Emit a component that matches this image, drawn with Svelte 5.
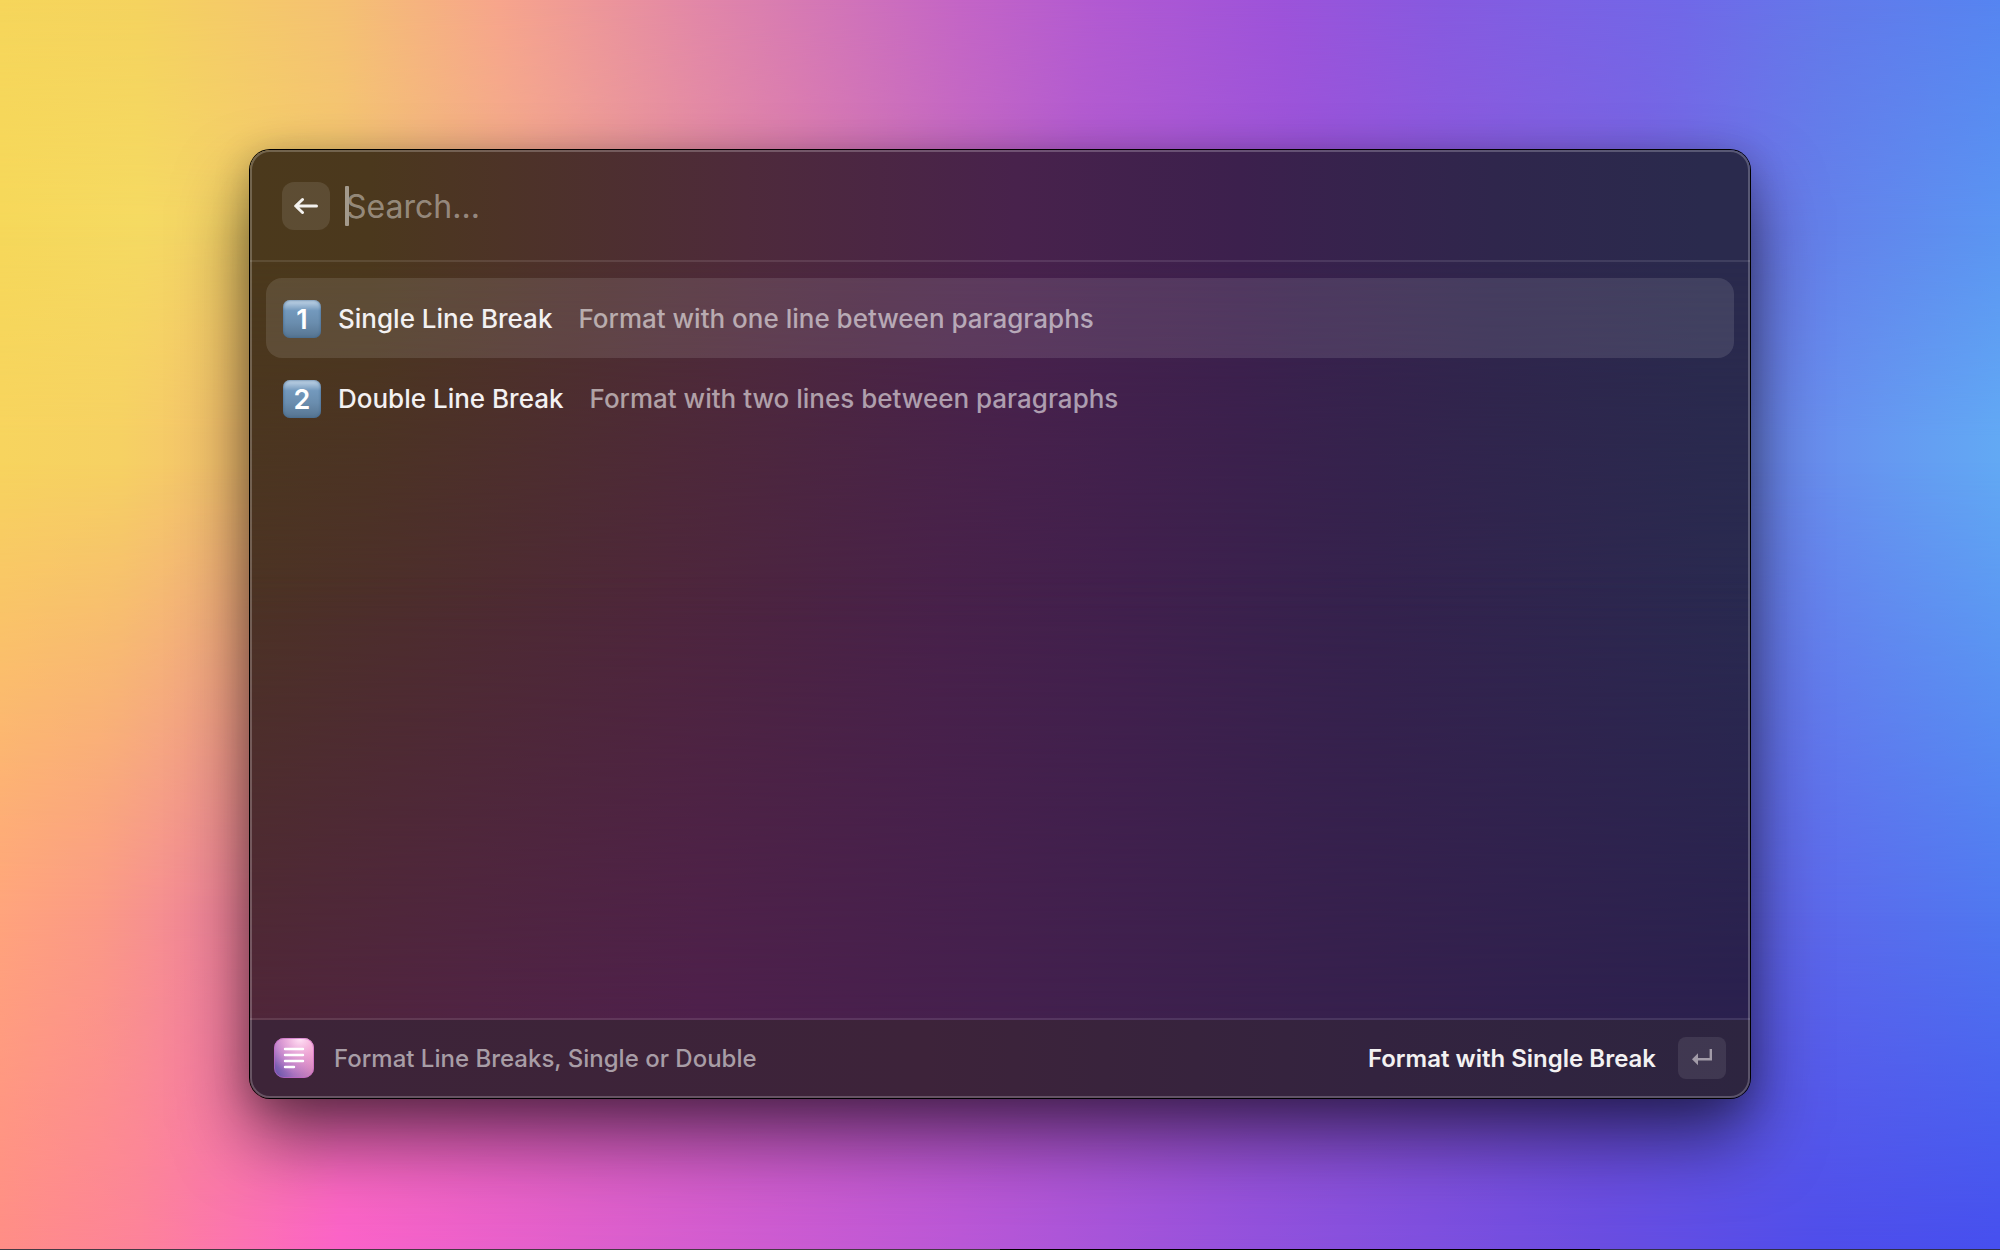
<script>
  let query = $state('');
  let selected = $state(0);
  const items = [
    { digit: '1', title: 'Single Line Break', subtitle: 'Format with one line between paragraphs' },
    { digit: '2', title: 'Double Line Break', subtitle: 'Format with two lines between paragraphs' }
  ];
</script>

<div class="desktop">
  <div class="wash w1"></div>
  <div class="wash w2"></div>
  <div class="wash w3"></div>
  <div class="wash w4"></div>

  <main class="window">
    <div class="tint t1"></div>
    <div class="tint t2"></div>
    <header>
      <button class="back" aria-label="Back">
        <svg width="24" height="18" viewBox="0 0 24 18" fill="none" stroke="#f3f1ee" stroke-width="3" stroke-linecap="round" stroke-linejoin="round">
          <path d="M22.5 9H2M8.500 2.500 1.700 9l6.800 6.500" />
        </svg>
      </button>
      <label class="search">
        <span class="caret"></span>
        <input type="text" placeholder="Search..." aria-label="Search" bind:value={query} />
      </label>
    </header>

    <ul>
      {#each items as item, i}
        <li>
          <button class="row" class:selected={selected === i} onclick={() => (selected = i)}>
            <span class="keycap">{item.digit}</span>
            <span class="title">{item.title}</span>
            <span class="subtitle">{item.subtitle}</span>
          </button>
        </li>
      {/each}
    </ul>

    <footer>
      <svg class="app" width="40" height="40" viewBox="0 0 40 40">
        <defs>
          <linearGradient id="base" x1="0" y1="1" x2="1" y2="0.4">
            <stop offset="0" stop-color="#5a50a8" />
            <stop offset="0.4" stop-color="#a872be" />
            <stop offset="1" stop-color="#ec92bc" />
          </linearGradient>
          <radialGradient id="shine" cx="0.65" cy="0.02" r="0.9">
            <stop offset="0" stop-color="#ffe3f6" />
            <stop offset="0.5" stop-color="#f8b8e6" stop-opacity="0.55" />
            <stop offset="1" stop-color="#f0a0e8" stop-opacity="0" />
          </radialGradient>
        </defs>
        <rect width="40" height="40" rx="10" fill="url(#base)" />
        <rect width="40" height="40" rx="10" fill="url(#shine)" />
        <rect x="0.500" y="0.500" width="39" height="39" rx="9.500" fill="none" stroke="#c860c4" stroke-opacity="0.6" />
        <path d="M11 11h18M11 17h18M11 23h18M11 29h9" stroke="#fff" stroke-width="2.400" stroke-linecap="round" />
      </svg>
      <span class="name">Format Line Breaks, Single or Double</span>
      <button class="action">
        <span>Format with Single Break</span>
        <kbd aria-label="Return">
          <svg width="22" height="18" viewBox="0 0 22 18">
            <path d="M19.800 0v10.200H6" fill="none" stroke="#a29ba8" stroke-width="2.400" />
            <path d="M1 10.200 7 4.200v12z" fill="#a29ba8" />
          </svg>
        </kbd>
      </button>
    </footer>
  </main>
</div>

<style>
  :global(body) {
    margin: 0;
    background: #b85ad0;
  }
  .desktop {
    position: relative;
    box-sizing: border-box;
    min-height: 100vh;
    padding: 150px 12.5%;
    font-family: Inter, 'Liberation Sans', sans-serif;
    font-weight: 500;
    overflow: hidden;
    background: linear-gradient(90deg, #f6d65b 0%, #f5d35f 7%, #f5c173 17%, #f7a58c 25%, #e287a8 35%, #c465c6 48%, #b25ad2 55%, #9d53da 64%, #875ae0 72%, #7168e8 84%, #6478ea 91%, #5685f1 100%);
  }
  .desktop::after {
    content: '';
    position: absolute;
    inset: auto 0 0;
    height: 1px;
    background: linear-gradient(90deg, #443a44 50%, #000 50%, #000 80%, #30304a 80%);
  }
  .wash {
    position: absolute;
    inset: 0;
  }
  .w1 {
    background: linear-gradient(90deg, #f6d85a 0%, #f5da62 7%, #f4c870 17%, #f3a890 27%, #dd7eae 40%, #b35cd0 54%, #9a54da 66%, #7a64e2 82%, #6480ea 91%, #5b95f2 100%);
    mask-image: linear-gradient(transparent 0%, #000 18%);
  }
  .w2 {
    background: linear-gradient(90deg, #f7d45e 0%, #f6d163 6%, #f5c070 12%, #ee8da0 25%, #c85cc8 50%, #9054dc 70%, #6a88ec 89%, #659bf1 95%, #62a9f4 100%);
    mask-image: linear-gradient(transparent 18%, #000 35%);
  }
  .w3 {
    background: linear-gradient(90deg, #ffa47c 0%, #fb9a86 5%, #f28898 10%, #ee68b8 25%, #b856d4 55%, #7050e0 80%, #5f66ea 89%, #5078f0 100%);
    mask-image: linear-gradient(transparent 37%, #000 73%);
  }
  .w4 {
    background: linear-gradient(90deg, #ff8d86 0%, #fd829a 7%, #fb62c8 17%, #df5fcc 29%, #b957d6 48%, #9151dc 63%, #6a4de0 80%, #4f4dea 91%, #464fee 100%);
    mask-image: linear-gradient(transparent 73%, #000 100%);
  }
  .window {
    position: relative;
    display: flex;
    flex-direction: column;
    box-sizing: border-box;
    min-height: calc(100vh - 302px);
    border-radius: 20px;
    overflow: hidden;
    background: linear-gradient(90deg, #4b391c 0%, #4b381d 8%, #4d3327 17%, #4e2a3b 33%, #48224c 51%, #3c204d 66%, #2f264c 83%, #2a2a4d 97%);
    box-shadow: 0 0 0 1px #000, 0 40px 72px rgb(0 0 0 / 0.54), 0 6px 36px rgb(0 0 0 / 0.24);
  }
  .window::after {
    content: '';
    position: absolute;
    inset: 0;
    border: 2px solid rgb(255 255 255 / 0.22);
    border-radius: 20px;
    pointer-events: none;
  }
  .tint {
    position: absolute;
    inset: 0;
  }
  .t1 {
    background: linear-gradient(90deg, #4c3324 0%, #4d2e2c 10%, #4e263c 28%, #48214a 46%, #41204d 58%, #34224d 75%, #292a50 100%);
    mask-image: linear-gradient(transparent 12%, #000 50%);
  }
  .t2 {
    background: linear-gradient(90deg, #50263a 0%, #502344 15%, #4e204c 30%, #44204e 50%, #37204d 72%, #2a204e 100%);
    mask-image: linear-gradient(transparent 45%, #000 93%);
  }
  header {
    position: relative;
    display: flex;
    align-items: center;
    gap: 16px;
    box-sizing: border-box;
    height: 112px;
    padding: 2px 32px 0;
    border-bottom: 2px solid rgb(255 255 255 / 0.1);
  }
  button {
    font: inherit;
    color: inherit;
    border: 0;
    background: none;
    cursor: pointer;
  }
  .back {
    display: grid;
    place-items: center;
    width: 48px;
    height: 48px;
    padding: 0;
    border-radius: 12px;
    background: rgb(255 255 255 / 0.1);
  }
  .search {
    position: relative;
    flex: 1;
    display: flex;
  }
  .search input {
    width: 100%;
    height: 48px;
    padding: 0;
    border: 0;
    outline: 0;
    background: none;
    font: inherit;
    font-size: 32px;
    font-weight: 400;
    color: #f3f1ee;
  }
  .search input::placeholder {
    color: rgb(255 255 255 / 0.43);
    opacity: 1;
  }
  .caret {
    position: absolute;
    left: -1px;
    top: 4px;
    width: 4px;
    height: 40px;
    border-radius: 1px;
    background: #a39a8c;
  }
  ul {
    position: relative;
    flex: 1;
    margin: 0;
    padding: 16px;
    list-style: none;
  }
  .row {
    display: flex;
    align-items: center;
    width: 100%;
    height: 80px;
    padding: 0 17px;
    border-radius: 16px;
    font-size: 26px;
    text-align: left;
  }
  .row.selected {
    background: rgb(255 255 255 / 0.11);
  }
  .keycap {
    display: grid;
    place-items: center;
    width: 38px;
    height: 38px;
    margin-top: 2px;
    border-radius: 7px;
    background: linear-gradient(#c3d6e8 0%, #a9c2da 10%, #7399bd 28%, #6a8dae 60%, #567490 100%);
    box-shadow: inset 0 0 2px 1px rgb(60 100 140 / 0.5);
    color: #fff;
    font-size: 27px;
    font-weight: 600;
    line-height: 1;
  }
  .title {
    margin-left: 17px;
    color: #f3f1f2;
  }
  .subtitle {
    margin-left: 26px;
    color: rgb(255 255 255 / 0.56);
  }
  footer {
    position: relative;
    display: flex;
    align-items: center;
    box-sizing: border-box;
    height: 80px;
    padding: 0 24px 2px;
    border-top: 2px solid rgb(255 255 255 / 0.1);
    background: linear-gradient(90deg, #3d2438, #3d233a 45%, #33233f 75%, #2d2540);
    background-clip: padding-box;
    font-size: 24px;
  }
  .name {
    margin-left: 20px;
    color: #a89da6;
  }
  .action {
    display: flex;
    align-items: center;
    gap: 22px;
    margin-left: auto;
    padding: 0;
    font-weight: 600;
    color: #f3f1f2;
  }
  kbd {
    display: grid;
    place-items: center;
    width: 48px;
    height: 42px;
    border-radius: 8px;
    background: rgb(255 255 255 / 0.09);
  }
</style>
